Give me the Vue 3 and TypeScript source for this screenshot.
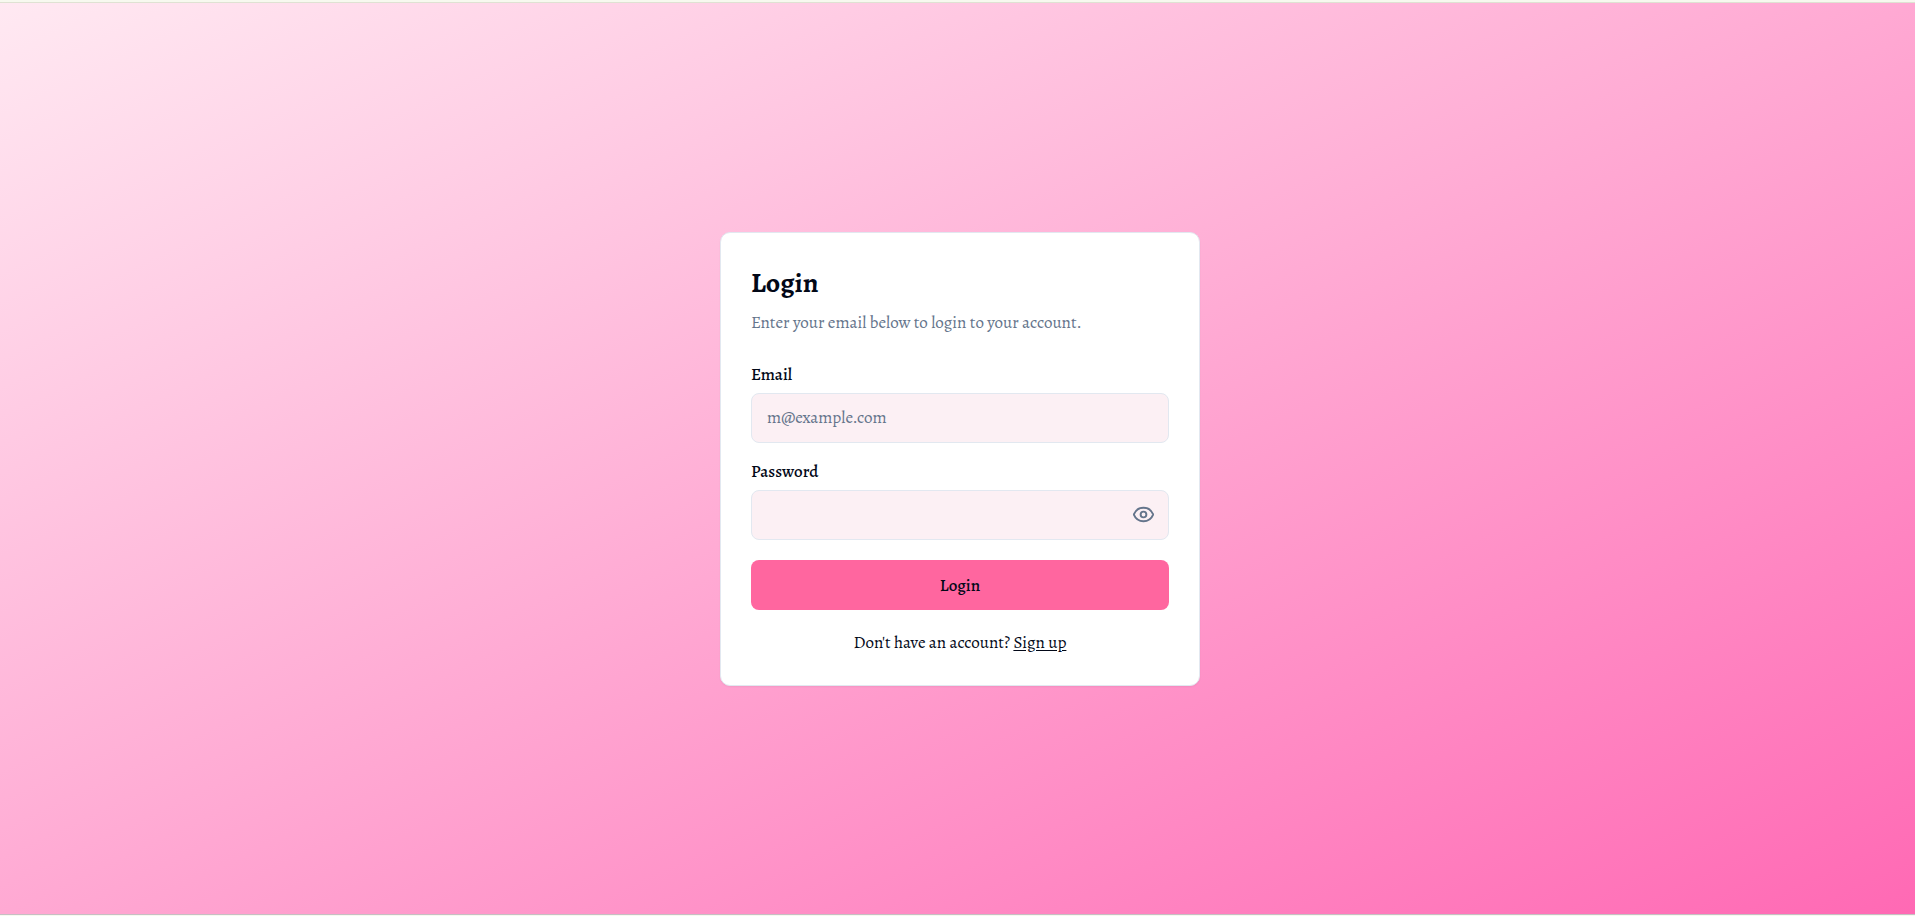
<script setup lang="ts">
import { ref } from 'vue'

const email = ref('')
const password = ref('')
const visible = ref(false)
</script>

<template>
  <div class="page">
    <main class="backdrop">
      <section class="card">
        <header class="intro">
          <h1>Login</h1>
          <p>Enter your email below to login to your account.</p>
        </header>
        <form class="form" @submit.prevent>
          <div class="field">
            <label for="email">Email</label>
            <input id="email" v-model="email" type="email" placeholder="m@example.com" />
          </div>
          <div class="field">
            <label for="password">Password</label>
            <div class="control">
              <input id="password" v-model="password" :type="visible ? 'text' : 'password'" />
              <button class="reveal" type="button" aria-label="Show password" @click="visible = !visible">
                <svg viewBox="0 0 24 24" fill="none" stroke="currentColor" stroke-width="2" stroke-linecap="round" stroke-linejoin="round">
                  <path d="M2.062 12.348a1 1 0 0 1 0-.696 10.75 10.75 0 0 1 19.876 0 1 1 0 0 1 0 .696 10.75 10.75 0 0 1-19.876 0" />
                  <circle cx="12" cy="12" r="3" />
                </svg>
              </button>
            </div>
          </div>
          <button class="submit" type="submit">Login</button>
        </form>
        <p class="signup">Don't have an account? <a href="#">Sign up</a></p>
      </section>
    </main>
  </div>
</template>

<style>
body {
  margin: 0;
}
</style>

<style scoped>
.page {
  box-sizing: border-box;
  display: flex;
  min-height: 100vh;
  padding: 2px 0 1px;
  background: #f7f9ef;
  color: #020817;
  font-family: Alegreya, "Liberation Serif", serif;
  font-size: 17px;
  line-height: 25px;
}

.backdrop {
  box-sizing: border-box;
  display: flex;
  flex: 1;
  align-items: center;
  justify-content: center;
  padding-left: 5px;
  border-top: 1px solid #dfe2d3;
  border-bottom: 1px solid #c6bfc3;
  background: linear-gradient(to bottom right, #ffe9f2, #ff69b4);
}

.card {
  box-sizing: border-box;
  width: 480px;
  padding: 30px;
  border: 1px solid #e2e8f0;
  border-radius: 10px;
  background: #fff;
  box-shadow: 0 1px 2px rgba(0, 0, 0, 0.05);
}

h1,
p {
  margin: 0;
}

h1 {
  font-size: 28px;
  font-weight: 600;
  line-height: 40px;
}

.intro {
  display: grid;
  gap: 7px;
  margin-bottom: 31px;
}

.intro p {
  color: #64748b;
}

.form {
  display: grid;
  gap: 20px;
}

.field {
  display: grid;
  gap: 10px;
}

label {
  font-size: 17px;
  font-weight: 500;
  line-height: 17px;
}

input {
  box-sizing: border-box;
  width: 100%;
  height: 50px;
  padding: 0 15px;
  border: 1px solid #e2e8f0;
  border-radius: 8px;
  background: #fcf0f4;
  color: inherit;
  font: inherit;
}

input::placeholder {
  color: #64748b;
}

.control {
  position: relative;
}

.reveal {
  position: absolute;
  top: 0;
  right: 0;
  display: flex;
  align-items: center;
  height: 50px;
  padding: 0 14px;
  border: 0;
  background: none;
  color: #64748b;
}

.reveal svg {
  width: 23px;
  height: 23px;
}

.submit {
  height: 50px;
  padding: 2px 0 0;
  border: 0;
  border-radius: 8px;
  background: #ff669f;
  color: inherit;
  font: inherit;
  font-weight: 500;
}

.signup {
  margin-top: 20px;
  text-align: center;
}

a {
  color: inherit;
  text-underline-offset: 2px;
}
</style>
